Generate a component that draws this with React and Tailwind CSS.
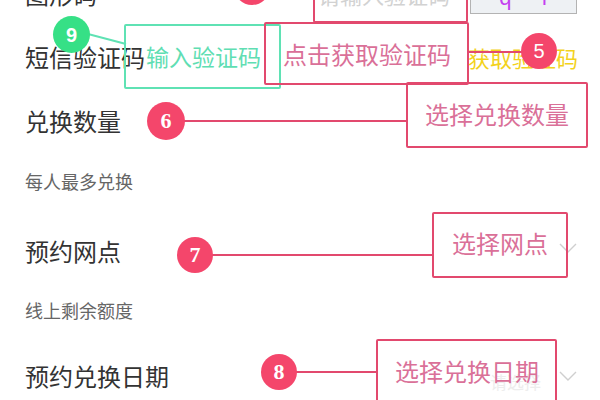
import React from 'react';

const cjk = { fontFamily: '"Noto Sans CJK SC", "Noto Sans", sans-serif' };

const Chevron = ({ className }) => (
  <svg className={className} width="18" height="10" viewBox="0 0 18 10" fill="none">
    <polyline points="1,1 9,9 17,1" stroke="#cfcfcf" strokeWidth="1.4" />
  </svg>
);

// form underneath the annotations
const Row = ({ h, children }) => (
  <div className={`flex items-center pl-[25px] pr-[23px] shrink-0 ${h}`}>{children}</div>
);

const Label = ({ children }) => (
  <span className="text-[24px] leading-none text-[#333333] whitespace-nowrap">{children}</span>
);

const Badge = ({ className, children, serif }) => (
  <div
    className={`absolute flex items-center justify-center rounded-full text-white leading-none ${className}`}
    style={{ fontFamily: serif ? '"Liberation Serif", serif' : '"Liberation Sans", sans-serif' }}
  >
    {children}
  </div>
);

const RedBox = ({ className, children }) => (
  <div className={`absolute flex items-center border-2 border-[#e2496e] rounded-[2px] text-[24px] leading-none text-[#da7098] whitespace-nowrap ${className}`}>
    {children}
  </div>
);

export default function App() {
  return (
    <div className="relative w-[600px] h-[400px] overflow-hidden bg-white" style={cjk}>
      <div className="flex flex-col mt-[-38px]">
        <Row h="h-[64px]">
          <Label>图形码</Label>
          <span className="ml-[221px] text-[22px] leading-none text-[#d2d2d2] whitespace-nowrap">请输入验证码</span>
          <div className="ml-[20px] w-[110px] h-[40px] bg-[#eef1f4] border border-[#b3b3b3] flex items-end justify-center gap-[30px] pb-[4px] text-[22px] leading-none text-[#c43ff0]" style={{ fontFamily: '"Liberation Sans", sans-serif' }}>
            <span>q</span>
            <span>f</span>
          </div>
        </Row>
        <Row h="h-[62px]">
          <Label>短信验证码</Label>
          <span className="ml-[323px] text-[22px] leading-none text-[#f3d21c] whitespace-nowrap">获取验证码</span>
        </Row>
        <Row h="h-[66px]">
          <Label>兑换数量</Label>
        </Row>
        <Row h="h-[54px]">
          <span className="text-[18px] leading-none text-[#666666]">每人最多兑换</span>
        </Row>
        <Row h="h-[86px]">
          <Label>预约网点</Label>
          <Chevron className="ml-auto mb-[6px]" />
        </Row>
        <Row h="h-[32px]">
          <span className="text-[18px] leading-none text-[#666666]">线上剩余额度</span>
        </Row>
        <Row h="h-[100px]">
          <Label>预约兑换日期</Label>
          <span className="ml-auto mr-[18px] mt-[10px] text-[17px] leading-none text-[#ededed]">请选择</span>
          <Chevron />
        </Row>
      </div>

      {/* annotations */}
      <svg className="absolute inset-0" width="600" height="400">
        <line x1="88" y1="34" x2="126" y2="44" stroke="#5fe2b4" strokeWidth="2" />
      </svg>

      <div className="absolute left-[468px] top-[51px] w-[55px] h-[2px] bg-[#e2496e]" />
      <div className="absolute left-[183px] top-[120px] w-[225px] h-[2px] bg-[#e2496e]" />
      <div className="absolute left-[212px] top-[254px] w-[222px] h-[2px] bg-[#e2496e]" />
      <div className="absolute left-[296px] top-[371px] w-[82px] h-[2px] bg-[#e2496e]" />

      <RedBox className="left-[313px] top-[-30px] w-[155px] h-[53px]" />
      <div className="absolute left-[124px] top-[24px] w-[157px] h-[65px] flex items-center pl-[20px] border-2 border-[#5fe2b4] rounded-[2px] text-[23px] leading-none text-[#5fdeb3] whitespace-nowrap">
        输入验证码
      </div>
      <RedBox className="left-[264px] top-[22px] w-[205px] h-[63px] pl-[17px]">点击获取验证码</RedBox>
      <RedBox className="left-[406px] top-[82px] w-[182px] h-[66px] pl-[17px] pb-[2px]">选择兑换数量</RedBox>
      <RedBox className="left-[432px] top-[212px] w-[136px] h-[66px] pl-[18px] pb-[4px]">选择网点</RedBox>
      <RedBox className="left-[376px] top-[339px] w-[181px] h-[64px] pl-[17px]">选择兑换日期</RedBox>

      <Badge className="left-[234px] top-[-31px] w-[36px] h-[36px] bg-[#f4466b]" />
      <Badge className="left-[53px] top-[16px] w-[37px] h-[37px] bg-[#36e086] text-[20px] font-bold">9</Badge>
      <Badge className="left-[521px] top-[33px] w-[36px] h-[36px] bg-[#f4466b] text-[20px]">5</Badge>
      <Badge serif className="left-[147px] top-[102px] w-[38px] h-[38px] bg-[#f4466b] text-[22px] font-bold">6</Badge>
      <Badge serif className="left-[177px] top-[237px] w-[36px] h-[36px] bg-[#f4466b] text-[22px] font-bold">7</Badge>
      <Badge serif className="left-[261px] top-[354px] w-[36px] h-[36px] bg-[#f4466b] text-[22px] font-bold">8</Badge>
    </div>
  );
}
